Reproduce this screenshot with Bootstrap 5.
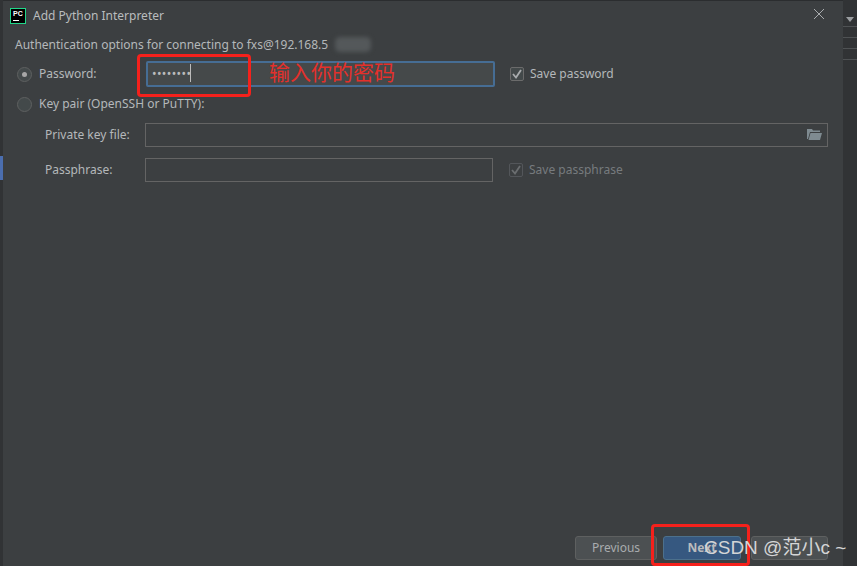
<!DOCTYPE html>
<html lang="en">
<head>
  <meta charset="UTF-8" />
  <title>Add Python Interpreter</title>
  <link href="https://cdn.jsdelivr.net/npm/bootstrap@5.3.0/dist/css/bootstrap.min.css" rel="stylesheet">
  <style>
    html, body { height: 100%; }
    body {
      margin: 0;
      overflow: hidden;
      background: #313335;
      color: #b4b8ba;
      font-family: "Noto Sans", "Noto Sans CJK SC", sans-serif;
      font-size: 12px;
      line-height: 16px;
    }
    .stage { width: 857px; height: 566px; position: relative; }
    .strip-left { width: 3px; background: #313335; }
    .strip-left .seg-a { height: 156px; }
    .strip-left .seg-b { height: 24px; background: #4b6eaf; }
    .strip-right { width: 14px; background: #313335; }
    .strip-right .tick { border-top: 1px solid #4f5254; height: 11px; }
    .strip-right .drop { width: 0; height: 0; margin: 17px 0 0 3px; border: 4px solid transparent; border-top: 5px solid #9a9da0; border-bottom: 0; }
    .dialog { width: 840px; background: #3c3f41; border-top: 1px solid #2b2d2f; }

    .title-row { height: 29px; padding: 7px 0 0 7px; gap: 7px; }
    .title-text { font-size: 12px; color: #b9bcbe; padding-top: 0; }
    .pc-logo {
      width: 16px; height: 16px; background: #000; border: 1px solid #21d789;
      color: #fff; font: 700 7px/8px "Liberation Sans", sans-serif;
      padding: 1px 0 0 2px; position: relative; flex: none;
    }
    .pc-logo i { position: absolute; left: 2px; bottom: 2px; width: 6px; height: 1px; background: #fff; }
    .close-x { margin: 0 18px 0 auto; width: 12px; height: 12px; }

    .form-body { padding: 0 15px 0 12px; }
    .auth-line { height: 16px; margin-top: 7px; padding-left: 0; }
    .smudge {
      position: absolute; left: 335px; top: 37px; width: 36px; height: 15px;
      background: #54585a; border-radius: 5px; filter: blur(2px);
    }
    .row-line { gap: 0; }
    .fake-radio {
      width: 15px; height: 15px; border-radius: 50%; background: #43494a;
      border: 1px solid #5e6060; flex: none; margin: 0 7px 0 2px; position: relative;
    }
    .fake-radio.on::after {
      content: ""; position: absolute; left: 4px; top: 4px; width: 5px; height: 5px;
      border-radius: 50%; background: #a7a7a7;
    }
    .lbl { width: 107px; flex: none; }
    .sub-lbl { width: 100px; margin-left: 30px; flex: none; }
    .form-control.ide-field {
      background: #3c3f41; border: 1px solid #646464; border-radius: 0;
      padding: 0 8px; height: 24px; min-height: 0; color: #bbb; font-size: 12px; box-shadow: none;
    }
    .form-control.ide-focus {
      width: 349px; height: 26px; background: #45494a; border: 2px solid #466d94;
      border-radius: 2px; padding: 0 4px; flex: none; line-height: 21px; letter-spacing: .4px;
      font-size: 12px; color: #bbb;
    }
    .caret-bar { display: inline-block; width: 1px; height: 18px; background: #bbb; vertical-align: -4px; margin-left: -1px; }
    .pw-row { height: 26px; margin-top: 8px; }
    .key-row { height: 16px; margin-top: 9px; }
    .file-row { height: 24px; margin-top: 11px; }
    .phrase-row { height: 24px; margin-top: 11px; }
    .w-short { width: 348px; flex: none; }
    .w-long { width: 683px; flex: none; position: relative; }
    .folder { position: absolute; right: 6px; top: 5px; width: 15px; height: 12px; }
    .fake-check {
      width: 14px; height: 14px; border: 1px solid #6b6b6b; border-radius: 2px;
      background: #43494a; flex: none; margin: 0 6px 0 15px; display: flex;
      align-items: center; justify-content: center;
    }
    .fake-check.off { background: #3c3f41; border-color: #53565a; margin-left: 16px; }
    .dim { color: #777b7e; }

    .btn-bar { margin-top: auto; padding: 0 15px 6px 0; gap: 6px; }
    .btn.ide-btn {
      width: 82px; height: 24px; padding: 0; font-size: 12px; line-height: 22px;
      background: #4c5052; border: 1px solid #5e6060; color: #a9acae; border-radius: 3px;
    }
    .btn.ide-btn.go { width: 78px; background: #365880; border-color: #4c708c; color: #bbbcbd; font-weight: 700; }
    .btn.ide-btn.third { width: 77px; margin-left: 4px; color: #7e8284; }

    .mark-box { position: absolute; border: 3px solid #f5211c; border-radius: 4px; pointer-events: none; }
    .mark-a { left: 137px; top: 54px; width: 114px; height: 43px; }
    .mark-b { left: 651px; top: 524px; width: 99px; height: 42px; }
    .mark-text {
      position: absolute; left: 269px; top: 57px; color: #e4302b; font-size: 21px; line-height: 28px;
      font-family: "Noto Sans CJK SC", sans-serif;
    }
    .wm {
      position: absolute; left: 704px; top: 535px; color: #d4d5d6; font-size: 19px; line-height: 26px;
      font-family: "Liberation Sans", "Noto Sans CJK SC", sans-serif; white-space: nowrap;
    }
  </style>
</head>
<body>
  <div class="stage d-flex">
    <div class="strip-left flex-shrink-0">
      <div class="seg-a"></div>
      <div class="seg-b"></div>
    </div>
    <div class="dialog d-flex flex-column">
      <div class="title-row d-flex">
        <div class="pc-logo">PC<i></i></div>
        <div class="title-text">Add Python Interpreter</div>
        <svg class="close-x" viewBox="0 0 12 12"><path d="M1 1l10 10M11 1L1 11" stroke="#a9acae" stroke-width="1" fill="none"/></svg>
      </div>
      <div class="form-body">
        <div class="auth-line">Authentication options for connecting to fxs@192.168.5</div>
        <div class="pw-row d-flex align-items-center">
          <span class="fake-radio on"></span>
          <span class="lbl">Password:</span>
          <div class="form-control ide-focus">••••••••<span class="caret-bar"></span></div>
          <span class="fake-check"><svg width="10" height="10" viewBox="0 0 10 10"><path d="M1 5l3 3.5L9 1" stroke="#a9acae" stroke-width="1.8" fill="none"/></svg></span>
          <span>Save password</span>
        </div>
        <div class="key-row d-flex align-items-center">
          <span class="fake-radio"></span>
          <span>Key pair (OpenSSH or PuTTY):</span>
        </div>
        <div class="file-row d-flex align-items-center">
          <span class="sub-lbl">Private key file:</span>
          <div class="w-long">
            <div class="form-control ide-field"></div>
            <svg class="folder" viewBox="0 0 15 12"><path d="M0 1h5l1 1.5h7V4H3L1 11H0zM3.5 5H15l-2 7H1.5z" fill="#7f8b91"/></svg>
          </div>
        </div>
        <div class="phrase-row d-flex align-items-center">
          <span class="sub-lbl">Passphrase:</span>
          <div class="form-control ide-field w-short"></div>
          <span class="fake-check off"><svg width="10" height="10" viewBox="0 0 10 10"><path d="M1 5l3 3.5L9 1" stroke="#6b6e70" stroke-width="1.8" fill="none"/></svg></span>
          <span class="dim">Save passphrase</span>
        </div>
      </div>
      <div class="btn-bar d-flex justify-content-end">
        <button class="btn ide-btn" type="button">Previous</button>
        <button class="btn ide-btn go" type="button">Next</button>
        <button class="btn ide-btn third" type="button"></button>
      </div>
    </div>
    <div class="strip-right flex-shrink-0">
      <div class="drop"></div>
      <div class="tick mt-1"></div>
      <div class="tick"></div>
      <div class="tick"></div>
      <div class="tick"></div>
    </div>

    <div class="smudge"></div>
    <div class="mark-box mark-a"></div>
    <div class="mark-box mark-b"></div>
    <div class="mark-text">输入你的密码</div>
    <div class="wm">CSDN @范小c ~</div>
  </div>
  <script src="https://cdn.jsdelivr.net/npm/bootstrap@5.3.0/dist/js/bootstrap.bundle.min.js"></script>
</body>
</html>
